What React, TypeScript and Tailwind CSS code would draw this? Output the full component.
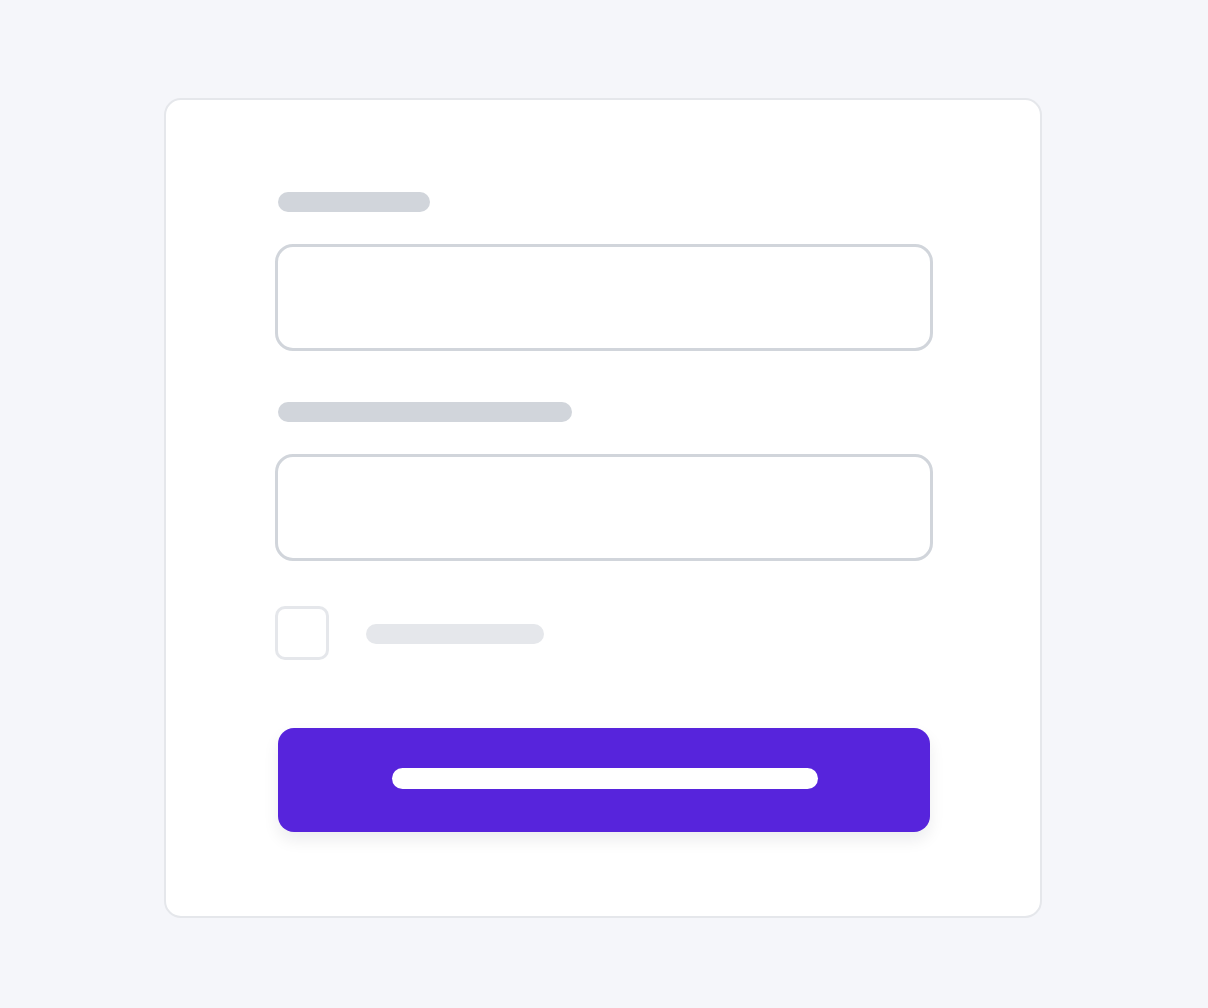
import React from "react";

export default function App() {
  return (
    <div className="min-h-[1008px] w-full bg-[#f5f6fa] pt-[98px]" style={{ fontFamily: "Inter, sans-serif" }}>
      <div className="ml-[164px] w-[878px] h-[820px] rounded-[17px] border-2 border-[#e5e7eb] bg-white pt-[92px] pl-[112px]">
        <div className="flex w-[652px] flex-col">
          <div className="h-5 w-[152px] rounded-full bg-[#d1d5db]" />
          <div className="mt-8 -ml-[3px] h-[107px] w-[658px] rounded-[18px] border-[3px] border-[#d1d5db]" />
          <div className="mt-[51px] h-5 w-[294px] rounded-full bg-[#d1d5db]" />
          <div className="mt-8 -ml-[3px] h-[107px] w-[658px] rounded-[18px] border-[3px] border-[#d1d5db]" />
          <div className="mt-[45px] -ml-[3px] flex items-start gap-[37px]">
            <div className="h-[54px] w-[54px] rounded-[10px] border-[3px] border-[#e5e7eb]" />
            <div className="mt-[18px] h-5 w-[178px] rounded-full bg-[#e5e7eb]" />
          </div>
          <div className="mt-[68px] flex h-[104px] w-[652px] items-start justify-center rounded-[16px] bg-[#5724dc] pt-10 pl-[2px] shadow-[0_8px_16px_rgba(17,24,39,0.08)]">
            <div className="h-[21px] w-[426px] rounded-full bg-white" />
          </div>
        </div>
      </div>
    </div>
  );
}
